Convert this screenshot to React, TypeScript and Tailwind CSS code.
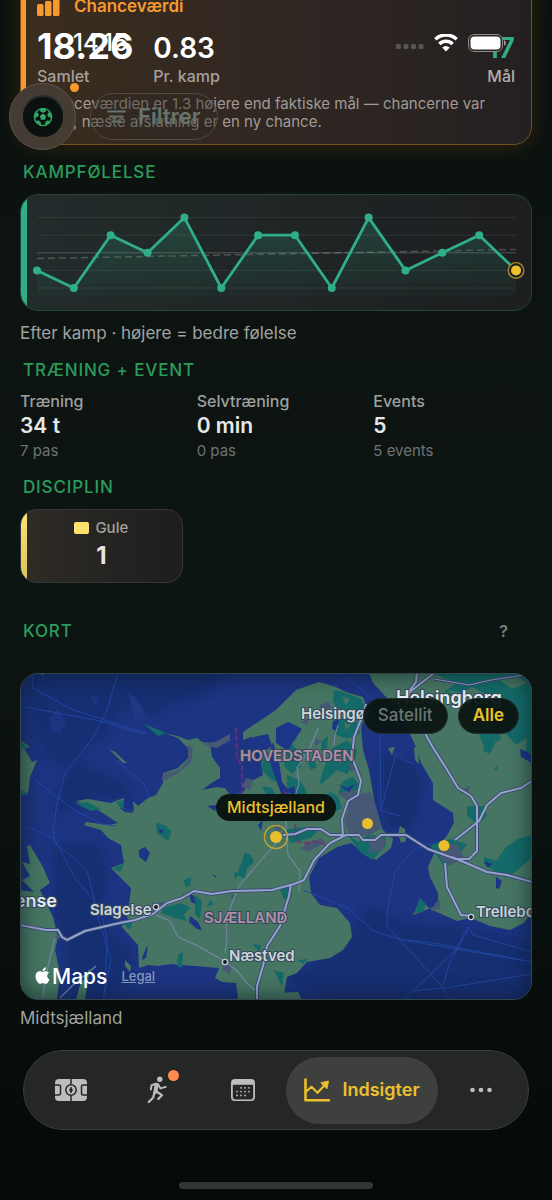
import React, { useState } from 'react';
import { FaApple } from 'react-icons/fa';

interface Stat {
  label: string;
  value: string;
  sub: string;
}

const stats: Stat[] = [
  { label: 'Træning', value: '34 t', sub: '7 pas' },
  { label: 'Selvtræning', value: '0 min', sub: '0 pas' },
  { label: 'Events', value: '5', sub: '5 events' },
];

const moods = [2, 1, 4, 3, 5, 1, 4, 4, 1, 5, 2, 3, 4, 2];

const SectionTitle: React.FC<{ children: React.ReactNode }> = ({ children }) => (
  <h2 className="px-[3px] text-[17px] leading-6 font-medium tracking-wider text-[#2a9d5c]">{children}</h2>
);

const StatusBar = () => (
  <div className="flex items-center justify-between pt-7 pl-[73px] pr-[46px] text-white">
    <span className="text-2xl leading-[30px] font-medium">14.15</span>
    <div className="flex items-center gap-2.5">
      <svg width="28" height="6" viewBox="0 0 28 6" fill="#5c5651" className="mt-2">
        <rect x="0" y="0" width="5" height="5" rx="1.5" />
        <rect x="7.5" y="0" width="5" height="5" rx="1.5" />
        <rect x="15" y="0" width="5" height="5" rx="1.5" />
        <rect x="22.5" y="0" width="5" height="5" rx="1.5" />
      </svg>
      <svg width="24" height="18" viewBox="0 0 24 18" fill="none" stroke="white" strokeWidth="3.4">
        <path d="M1.3 5.3a15.3 15.3 0 0 1 21.4 0" />
        <path d="M5.4 10a9.4 9.4 0 0 1 13.2 0" />
        <path d="M12 17.6l-3.8-4a5.2 5.2 0 0 1 7.6 0z" fill="white" stroke="none" />
      </svg>
      <svg width="38" height="18" viewBox="0 0 38 18">
        <rect x="0.5" y="0.5" width="34" height="17" rx="5.5" fill="#2a2522" stroke="#8d8985" />
        <rect x="2.5" y="2.5" width="30" height="13" rx="4" fill="white" />
        <path d="M36 6v6q2-1 2-3t-2-3z" fill="#9a9692" />
      </svg>
    </div>
  </div>
);

const FloatingControls = () => (
  <div className="relative mt-[25px] ml-[9px] flex items-center gap-3.5">
    <button
      aria-label="Hold"
      className="flex size-[67px] items-center justify-center rounded-full border border-[#5b544b] bg-[#443c33]"
    >
      <span className="flex size-10 items-center justify-center rounded-full bg-[#0a110e] shadow-[0_-2px_1px_#262b2e]">
        <svg width="20" height="20" viewBox="0 0 20 20">
          <circle cx="10" cy="10" r="8.6" fill="none" stroke="#30a866" strokeWidth="1.4" />
          <g fill="#30a866">
            <path d="M10 6.6l3.2 2.3-1.2 3.8H8L6.800 8.900z" />
            <path d="M6.500 2h7l-1 2.700L10 5.700l-2.500-1z" />
            <path d="M17 5l1.500 5.800-2.700-.5-1.500-1.900.5-2.400z" />
            <path d="M17 15.300l-5 3 .3-3.300 1.800-1.500 2.300.3z" />
            <path d="M3 15.300l5 3-.3-3.300-1.800-1.500-2.300.3z" />
            <path d="M3 5l-1.500 5.800 2.700-.5 1.500-1.900-.5-2.400z" />
          </g>
        </svg>
      </span>
    </button>
    <span className="absolute top-0 left-[61px] size-[9px] rounded-full bg-[#f7992e]" />
    <button className="flex h-[47px] items-center gap-3 rounded-full border border-[#504b43] bg-[#2e2922]/40 px-4 text-[22px] font-semibold text-[#66746c]">
      <svg width="19" height="13" viewBox="0 0 19 13" stroke="currentColor" strokeWidth="1.8" strokeLinecap="round">
        <path d="M1 1.5h17M3 6.5h13M5 11.5h9" />
      </svg>
      Filtrer
    </button>
  </div>
);

const ChanceCard = () => (
  <section className="relative -mt-8 overflow-hidden rounded-[18px] border border-[#75501f] bg-linear-to-r from-[#3b2d1e] via-[#302722] to-[#242021] pt-[25px] pr-4 pb-[13px] pl-4 shadow-[0_0_22px_rgba(150,90,20,0.28)]">
    <div className="absolute inset-y-0 left-0 w-[5px] bg-[#f7992e]" />
    <div className="flex items-center gap-3.5 text-[17px] leading-6 font-semibold text-[#f7992e]">
      <svg width="23" height="19" viewBox="0 0 23 19" fill="currentColor">
        <rect x="0" y="7" width="6.5" height="12" rx="1.5" />
        <rect x="8" y="4" width="6.5" height="15" rx="1.5" />
        <rect x="16" y="0" width="6.5" height="19" rx="1.5" />
      </svg>
      Chanceværdi
    </div>
    <div className="mt-2 flex items-end gap-5">
      <div>
        <p className="text-4xl leading-10 font-bold text-white">18.26</p>
        <p className="text-base leading-5 font-medium text-[#a5a09b]">Samlet</p>
      </div>
      <div>
        <p className="text-[28px] leading-9 font-semibold text-white">0.83</p>
        <p className="text-base leading-5 font-medium text-[#a5a09b]">Pr. kamp</p>
      </div>
      <div className="ml-auto text-right">
        <p className="text-[28px] leading-9 font-semibold text-[#2fae87]">17</p>
        <p className="text-base leading-5 font-medium text-[#b3afab]">Mål</p>
      </div>
    </div>
    <p className="mt-[9px] text-[15px] leading-[18px] whitespace-nowrap text-[#a09b96]">
      Chanceværdien er 1.3 højere end faktiske mål — chancerne var
      <br />
      gode, næste afslutning er en ny chance.
    </p>
  </section>
);

const MoodChart = () => {
  const points = moods.map((mood, i) => ({ x: 37 + i * 36.85, y: 305.6 - mood * 17.6 }));
  const line = points.map(p => `${p.x},${p.y}`).join(' ');
  const last = points[points.length - 1];

  return (
    <div className="relative overflow-hidden rounded-[18px] border border-[#24443c] bg-linear-to-r from-[#222c2b] to-[#1d1e20]">
      <div className="absolute inset-y-0 left-0 w-[6px] bg-[#2fae87]" />
      <svg viewBox="21 195 510 115" className="block w-full">
        <defs>
          <linearGradient id="mood-area" x1="0" y1="0" x2="0" y2="1">
            <stop offset="0" stopColor="#2fae87" stopOpacity="0.24" />
            <stop offset="1" stopColor="#2fae87" stopOpacity="0.03" />
          </linearGradient>
        </defs>
        {[1, 2, 3, 4, 5].map(level => (
          <path
            key={level}
            d={`M37 ${305.6 - level * 17.6}H516`}
            stroke="white"
            strokeOpacity={level === 3 ? 0.22 : 0.08}
          />
        ))}
        <path d="M37 258.5L516 249.5" stroke="white" strokeOpacity="0.2" strokeWidth="1.5" strokeDasharray="7 4" />
        <polygon points={`37,297 ${line} 516,297`} fill="url(#mood-area)" />
        <polyline points={line} fill="none" stroke="#2fae87" strokeWidth="2.8" strokeLinejoin="round" />
        {points.slice(0, -1).map(p => (
          <circle key={p.x} cx={p.x} cy={p.y} r="4" fill="#2fae87" />
        ))}
        <circle cx={last.x} cy={last.y} r="7.8" fill="#1d1e20" stroke="#a88a25" strokeWidth="1.4" />
        <circle cx={last.x} cy={last.y} r="5" fill="#ecc12c" />
      </svg>
    </div>
  );
};

const MapDrawing = () => (
  <svg viewBox="21 674 510 325" className="block w-full" role="img" aria-label="Kort over Sjælland">
    <defs>
      <filter id="depth-blur">
        <feGaussianBlur stdDeviation="4" />
      </filter>
    </defs>
    <rect x="20" y="673" width="512" height="327" fill="#1d3482" />

    {/* Deeper water */}
    <g fill="#192e72" filter="url(#depth-blur)">
      <path d="M20 673h210l-35 28-30 5-8 12-18-8-22 2-10 25-22 12-8 20-25-5-12-20z" />
      <path d="M60 775l25-10 45 22 5 12-40-2-20 12-18 8z" />
      <path d="M52 845l45-2 12 30-8 40 10 20 22 18-4 30-28 20-38-10 4-40-12-34z" />
      <path d="M380 755l30 5 12 18-4 35-12 22-18-10-8-24z" />
      <path d="M368 905l40 18 60 6 64 10v60H330l-50-20 60-28z" />
    </g>
    <path d="M128 692q18 12 17 30l-10-4-4-14z" fill="#223784" />
    <path d="M50 718l8-10 8 14-6 12-10-4zM90 696l10 2-4 10z" fill="#1f3480" />

    {/* Land */}
    <g fill="#467663">
      <path d="M144 723l16 9 17 4 11 4 9-2 5 4 8 1 2 14 8 11v10l-7 4-11 8 15-3 8 1 5 7 13-2 5-10 15-8-2-12-6-8 2-12-6-6-8 3v-8l33-22 20-20 23-8 17 5 10 5 17 5 5 13-7 17 2 23 6 20 4 23 3 20 7 17 10 9-2 9-15 12-12-7-13-10-14 4-18 11-10 19 2 16 9 12 17 3 13 15 2 14-9 13-13 8-23 4-10 11-10 4-4 22h-45l-2-16-14-1-7-4 4-10-24-2-14-1-10-1-13 2-10-1-9 3-1-23-9-10-8-9 8-5-4-8 4-8 2-17-13-13-7-7 13-5-3-18-13-7-7-8-17-5 2-3 22 3 10-2-20-13-22-9 12-2 23 4 7-3 6-2-1 10 11 3-1-10 5 5 10-8 8-3 7-12v-10l15-5 10-10v-10l-10-10-20-7z" />
      <path d="M369 673l4 10 13 14 10 8 12 25 8 17 5 16 12 20v17l20 13 1 10-8 14-9 10-9 20 2 10 8 16v12l-25 10 7-15 12 10 5 2 20 9 14-3 19 8 20 4 14-7 9-13V673z" />
      <path d="M20 740l10 7-6 2 3 4 5 9 5-2-7 17-2 17-8 1zM30 845l13 22 7 16-10 7 13 27 5 20-3 13 5 23-3 27H20V890l14 2-12-12 8-4-8-14 8 2-3-18z" />
      <path d="M90 968l-5 31H76l4-14zM109 749l6 3 12 11h-4zM125 960l6 6-1 6-5-6zM41 673h4l-3 3zM276 993l22-1 4 8h-26zM388 748l7-1-3 8zM400 826l5 3 1 12-5 2-3-9zM414 747l4 1 1 16-4-4z" />
    </g>

    {/* Forest */}
    <g fill="#146a69">
      <path d="M334 690l15 4 12 5 6 12-8 10-14-6-12-12zM339 716l18 5 3 12-12 6-14-5 2-10zM333 748l14-8 10 10-2 12-8 12-10-4-6 6-12 10 4-16zM343 781l10-4 7 8-8 12-14-4zM318 800l12-8 8 4 4 12-12 6-14-2z" />
      <path d="M255 745l12 6 8 14 4 18-8-3-9-10 1-14zM284 752l8-8 6 7 3 15-9 8-8-8zM287 775l14 6 6 12-8 8-12-6zM304 806l10 3-2 10-9-3zM288 722l12 5-4 14-9-6zM262 786l10 2 4 8-10-2zM308 764l6-6 3 9-6 3zM322 741l6-5-1 12-6 2z" />
      <path d="M346 833l12 9 10-8 18 4v8l-14 14-12-8zM283 830l22-3 14 3-8 8-20 5zM245 852l6 3 3 7-7 6-2 11-8-4zM234 872l4 1-3 8zM163 908l18-5 10 5-7 6 3 7-12-3-14-5zM195 895l7 6-2 18-5-5zM210 900l4 4-7 3zM280 890l8-4 4 10-8 4zM156 822l10 4 6 5-4 10-11-8zM178 955l5-3-1 16-5-2zM252 944l9 1-1 7zM184 880l7-3-1 9-5 1z" />
      <path d="M432 673h100v62l-16 10-16-18-14-12-22-10-20-14 14-8zM474 722l12 8 12-5 3 14-16 10zM485 742l14-8-9 20-7-3zM467 806h17l3 10-10 8-10-8zM430 845l20-6 17 5-8 12-16 9zM484 857l12 4 10-14 12-8 14-4v22l-14 13-12 8-10-6-12-8zM494 768l4-2-1 5zM420 898l6 6-3 8-9 1zM520 700l12 10v60l-6-20 2-24z" />
      <path d="M116 802l8-2-2 10zM75 803l12-1 14 7-10 2zM144 724l22 9-8 3zM112 868l12-4-4 8zM120 920l12 2-2 8zM21 742l8 6-8 1zM274 970l10 3-2 14zM20 790l9 3-9 3zM297 960l12-1-6 5z" />
    </g>
    <g fill="#467663">
      <path d="M448 690l14 3 10-6 16 8-18 8-14-4zM500 680l18-3 10 6-16 6zM342 697l8 2-4 6zM344 722l7 3-5 5zM338 756l6-4 2 6-6 5z" />
    </g>

    {/* Wetland and built-up areas */}
    <g fill="#465873">
      <path d="M188 745l5 3-2 15-13 10-13 7-4-1 3-5 16-5 8-10zM203 743l12-1 15-8v6l-13 8-11-2zM246 778l7 2-3 10-8-3z" />
      <path d="M347 797l24-5 5 14 6 22-9 5-14 4-9-4-6-10 4-12zM370 835l16 5-4 11-13 2zM318 706l10-5 4 6-7 5zM315 738l7 3-7 6zM300 848l20-10 6 4-18 10zM338 793l16-3 6 6-14 4zM274 822l8 6-6 5z" />
      <path d="M440 845l18-1 6 14-15 8-9-8zM462 790l8-5-1 7-9 2zM152 903l12-1-4 8-8 1zM224 962l8 2-2 10-8-4zM231 894l6 2-6 4zM53 937l6-2 1 4zM436 902l4-2v9l-9 2zM300 722l9-4-2 7zM348 762l9 7-6 3z" />
    </g>

    {/* Inland water */}
    <g fill="#1d3588">
      <path d="M276 728l12-6 14 7-9 13-5 9-12-8zM333 721l6-2-2 12-5-2zM250 738l18-4 4 12-8 6-3 12-10-4zM273 742l6 20 3 20 8 10-8 4-8-22-6-18zM286 790l8-4 3 12zM337 784l10 4 8-4-6 8zM139 850l6-3 5 6-4 9-7-5zM189 893l5 3 2 8-5-2zM190 916l8 6 4 8-5-1-8-7zM142 958l4-10 2-2-2 12-4 2zM120 808l10 1 4 4-9-1zM158 829l6 1-3 4zM484 861l8 3-4 4zM496 877l6 4-3 8-3-1zM520 749l8 3 6 6v6l-13-7zM207 806l10-1-2 6zM258 825l5-6-2 12zM211 874l5 2v2z" />
    </g>

    {/* Ferry routes */}
    <g fill="none" stroke="#2146a4" strokeWidth="1">
      <path d="M118 673l-12 40-14 26-27 34-8 32-4 25 2 10 20 38 25 30 7 30-2 62M53 842q30 22 35 32l12 50 11 36-8 38M32 673l1 15 38 21 74 24M20 706l80 15 44 13 2-3M35 780l39 30 28 14 14 2M20 826l12 3 28 12M117 760l9 9 18 15 5 12" />
      <path d="M340 673l36 28M380 725l1 85 15-57 9 8 9 3M303 890l45 18 25 23 30 9 129 22M402 940l26 2 104 20M405 999l12-12 37-35 14-25M468 927l5 8 59 17M468 930l-18 32-7 24M450 1000l-10-16-53-58v-14l8-40 18-22 25-9M380 810l20 6M413 991l38-4 81-13M235 738l-10 6" />
    </g>

    {/* Region borders */}
    <path d="M236 727l1 30 5 10v30M284 791l8 8M295 824l3 18 10 1M305 845l7-4 18 5" fill="none" stroke="#762e78" strokeWidth="1.5" strokeDasharray="6 2" />

    {/* Roads */}
    <g fill="none" stroke="#7486ad" strokeWidth="1.1">
      <path d="M156 915l14 6 8 16 20 9 28 16 12 10 8 10 10 9M276 843l-19 22-18 21-8 20-5 20 1 12-2 15M286 810v23l2 22 12 16-1 20M55 938l-4 16-6 25-2 18M60 998l12-12 24-20" />
      <path d="M318 728l-8 20-13 20 2 16-4 12M338 725l-3 10-1 10" />
    </g>
    {[
      { stroke: '#3c4b72', width: 3.8 },
      { stroke: '#94a3cb', width: 2 },
    ].map(layer => (
      <g key={layer.stroke} fill="none" stroke={layer.stroke} strokeWidth={layer.width} strokeLinejoin="round">
        <path d="M20 925l26 5h12l4 7 5 3 18-9 30-7 20-4 18-6 14-11 15-5 12-7 18 3 20-3 40-1 22-6 10-4 10-20 16-17 16-8h13l4 5h12l6-5h25l22 14 28 10h13l8-8V806l-6-10-13-8-12-20-14-22-12-22" />
        <path d="M291 884l-2 12-9 30-13 20-4 20-6 20v16" />
        <path d="M343 837l-1-18 6-18 10-6 3-14-9-24 2-20 8-20 4-13M343 835h-13l-9-6h-14l-12 5-12 1" />
        <path d="M445 863l2 24 11 22 3 6 10 1M452 857l35 15 20 3 25 7M455 840l24-19 8-16 14-12 20-5 11-7M404 710l6-20 6-8 1-9M406 695l28-22" />
        <path d="M434 679l35 6 22-5 40-6" strokeWidth={layer.width - 1} />
      </g>
    ))}

    {/* Towns */}
    <g fill="#141a22" stroke="#c3cbd6" strokeWidth="1.3">
      <circle cx="156" cy="907" r="2.6" />
      <circle cx="225" cy="962" r="2.6" />
      <circle cx="471" cy="917" r="2.6" />
    </g>
    <g
      fontFamily="Inter, sans-serif"
      fontSize="15"
      fontWeight="600"
      fill="#cdd5d8"
      stroke="#34485d"
      strokeWidth="2"
      paintOrder="stroke"
    >
      <text x="301" y="719">Helsingør</text>
      <text x="90" y="915">Slagelse</text>
      <text x="229" y="961">Næstved</text>
      <text x="476" y="917">Trelleborg</text>
      <text x="57" y="907" textAnchor="end" fontSize="18" fill="#e8edef">Odense</text>
      <text x="396" y="704" fontSize="18" fill="#e8edef">Helsingborg</text>
      <g fill="#b08fa5">
        <text x="240" y="761">HOVEDSTADEN</text>
        <text x="204" y="923">SJÆLLAND</text>
      </g>
    </g>

    {/* Pins */}
    <g fill="#e8be2e">
      <circle cx="276" cy="837" r="11.5" fill="none" stroke="#b9a337" strokeWidth="1.5" />
      <circle cx="276" cy="837" r="6" />
      <circle cx="367.5" cy="823.5" r="5.5" />
      <circle cx="444" cy="845.5" r="5.5" />
    </g>
  </svg>
);

const MapCard: React.FC = () => {
  const [satellite, setSatellite] = useState(false);

  return (
    <div className="relative overflow-hidden rounded-[18px] border border-[#34474f]">
      <MapDrawing />
      <div className="pointer-events-none absolute inset-0 rounded-[17px] shadow-[inset_0_0_22px_rgba(8,18,22,0.65)]" />
      <div className="absolute top-6 right-3 flex gap-2.5">
        <button
          onClick={() => setSatellite(!satellite)}
          aria-pressed={satellite}
          className="h-9 rounded-full border border-[#22302c] bg-[#0b1512]/95 px-3.5 text-[17px] font-medium text-[#6b7571]"
        >
          Satellit
        </button>
        <button className="h-9 rounded-full border border-[#22302c] bg-[#0b1512]/95 px-3.5 text-[17px] font-semibold text-[#ecc12c]">
          Alle
        </button>
      </div>
      <span className="absolute top-[37%] left-1/2 -translate-x-1/2 rounded-full bg-[#0b1512] px-[11px] text-base leading-[27px] font-medium text-[#ecc12c]">
        Midtsjælland
      </span>
      <div className="absolute bottom-2.5 left-3 flex items-center text-white">
        <FaApple size={19} className="mb-1" />
        <span className="text-[21px] leading-6 font-medium">Maps</span>
        <a href="#legal" className="ml-3.5 text-[13px] font-medium text-[#8496b8] underline">
          Legal
        </a>
      </div>
    </div>
  );
};

const TabBar = () => (
  <nav className="mx-[3px] mt-5 flex h-20 items-center rounded-full border border-[#3b3d3c] bg-[#252726] px-1 text-[#bcbdbc]">
    <button aria-label="Kampe" className="flex flex-1 justify-center">
      <svg width="32" height="22" viewBox="0 0 32 22">
        <rect width="32" height="22" rx="4" fill="currentColor" />
        <g fill="none" stroke="#252726" strokeWidth="1.5">
          <path d="M16 0v5.5M16 16.5V22M0 6h4q1.500 0 1.500 1.500v7Q5.500 16 4 16H0M32 6h-4q-1.500 0-1.500 1.500v7q0 1.500 1.500 1.500h4" />
          <circle cx="16" cy="11" r="5.2" />
          <path d="M16 8v6" />
        </g>
        <circle cx="16" cy="11" r="1.8" fill="#252726" />
      </svg>
    </button>
    <button aria-label="Træning" className="flex flex-1 justify-center">
      <span className="relative">
        <svg width="20" height="28" viewBox="0 0 20 28" fill="none" stroke="currentColor" strokeLinecap="round" strokeLinejoin="round">
          <circle cx="12.8" cy="3.2" r="2.7" fill="currentColor" stroke="none" />
          <path d="M9.6 8.8L8.400 16" strokeWidth="4" />
          <path d="M8.800 7.800L4.600 9.200 3.800 13.500" strokeWidth="2" />
          <path d="M11 8.200l2.500 4.200 5.300-1.500" strokeWidth="2" />
          <path d="M9.400 15.500l5.600 3.700-3.800 3.800" strokeWidth="2.2" />
          <path d="M7.400 16.200l-1.200 5.200L1.800 26" strokeWidth="2.2" />
        </svg>
        <span className="absolute -top-1.5 -right-3 size-[11px] rounded-full bg-[#ff8a4c]" />
      </span>
    </button>
    <button aria-label="Kalender" className="flex flex-1 justify-center">
      <svg width="24" height="22" viewBox="0 0 24 22">
        <path
          fillRule="evenodd"
          fill="currentColor"
          d="M4 0h16q4 0 4 4v14q0 4-4 4H4q-4 0-4-4V4q0-4 4-4zM1.800 5.800V18q0 2.400 2.400 2.400h15.600q2.400 0 2.400-2.400V5.800z"
        />
        <g fill="currentColor">
          {[8.8, 12.6, 16.4].map((y, row) =>
            [6, 10, 14, 18]
              .filter((_, col) => !(row === 0 && col === 0) && !(row === 2 && col === 3))
              .map(x => <circle key={`${x}-${y}`} cx={x} cy={y} r="0.9" />)
          )}
        </g>
      </svg>
    </button>
    <button
      aria-current="page"
      className="flex h-[67px] w-[152px] items-center justify-center gap-3 rounded-full bg-[#3e403e] text-lg font-semibold text-[#ecc12c]"
    >
      <svg width="26" height="24" viewBox="0 0 26 24" fill="none" stroke="currentColor" strokeWidth="2.6" strokeLinecap="round" strokeLinejoin="round">
        <path d="M1.500 1.500v20.700h23.500" />
        <path d="M2 13.800l5.500-5 6 6 7.500-8" strokeWidth="2.2" />
        <path d="M17.200 4.800l7.300-1.800-1.500 7.500z" fill="currentColor" strokeWidth="1" />
      </svg>
      Indsigter
    </button>
    <button aria-label="Mere" className="flex flex-1 justify-center">
      <svg width="22" height="6" viewBox="0 0 22 6" fill="currentColor">
        <circle cx="2.5" cy="3" r="2.3" />
        <circle cx="11" cy="3" r="2.3" />
        <circle cx="19.5" cy="3" r="2.3" />
      </svg>
    </button>
  </nav>
);

const App: React.FC = () => {
  return (
    <div className="relative flex min-h-screen flex-col overflow-hidden bg-linear-to-b from-[#0b110e] via-[#0d1512] to-[#060a09] px-5 font-['Inter',sans-serif]">
      <ChanceCard />

      <section className="mt-[15px] flex flex-col gap-2.5">
        <SectionTitle>KAMPFØLELSE</SectionTitle>
        <MoodChart />
        <p className="text-[17px] leading-6 text-[#a0a3a1]">Efter kamp · højere = bedre følelse</p>
      </section>

      <section className="mt-[13px]">
        <SectionTitle>TRÆNING + EVENT</SectionTitle>
        <div className="mt-[9px] grid grid-cols-3 gap-[18px]">
          {stats.map(stat => (
            <div key={stat.label}>
              <p className="text-base leading-5 font-medium text-[#9da09f]">{stat.label}</p>
              <p className="text-[21px] leading-[30px] font-semibold text-[#e6e8e7]">{stat.value}</p>
              <p className="text-[15px] leading-5 text-[#6f7372]">{stat.sub}</p>
            </div>
          ))}
        </div>
      </section>

      <section className="mt-3.5">
        <SectionTitle>DISCIPLIN</SectionTitle>
        <div className="mt-2.5 grid grid-cols-3 gap-3">
          <div className="relative flex flex-col items-center overflow-hidden rounded-[16px] border border-[#343534] bg-linear-to-r from-[#2f2c25] to-[#1e1d1f] py-2">
            <div className="absolute inset-y-0 left-0 w-[6px] bg-linear-to-b from-[#ffe578] to-[#d6c25f]" />
            <div className="flex items-center gap-1.5 text-[15px] leading-5 font-medium text-[#a3a19d]">
              <span className="h-3 w-[15px] rounded-xs bg-[#ffe26c]" />
              Gule
            </div>
            <p className="text-2xl leading-9 font-bold text-[#e6e5e3]">1</p>
          </div>
        </div>
      </section>

      <section className="mt-9">
        <div className="flex items-center justify-between pr-6">
          <SectionTitle>KORT</SectionTitle>
          <button aria-label="Hjælp til kort" className="text-base leading-6 font-semibold text-[#7b7f7d]">
            ?
          </button>
        </div>
        <div className="mt-[30px]">
          <MapCard />
        </div>
        <p className="mt-1.5 text-[17px] leading-6 text-[#a0a3a1]">Midtsjælland</p>
      </section>

      <TabBar />
      <div className="mx-auto mt-auto mb-[11px] h-[7px] w-[38%] rounded-full bg-[#333434]" />

      {/* Status bar and filter float above the scrolled content */}
      <header className="absolute inset-x-0 top-0">
        <StatusBar />
        <FloatingControls />
      </header>
    </div>
  );
};

export default App;
